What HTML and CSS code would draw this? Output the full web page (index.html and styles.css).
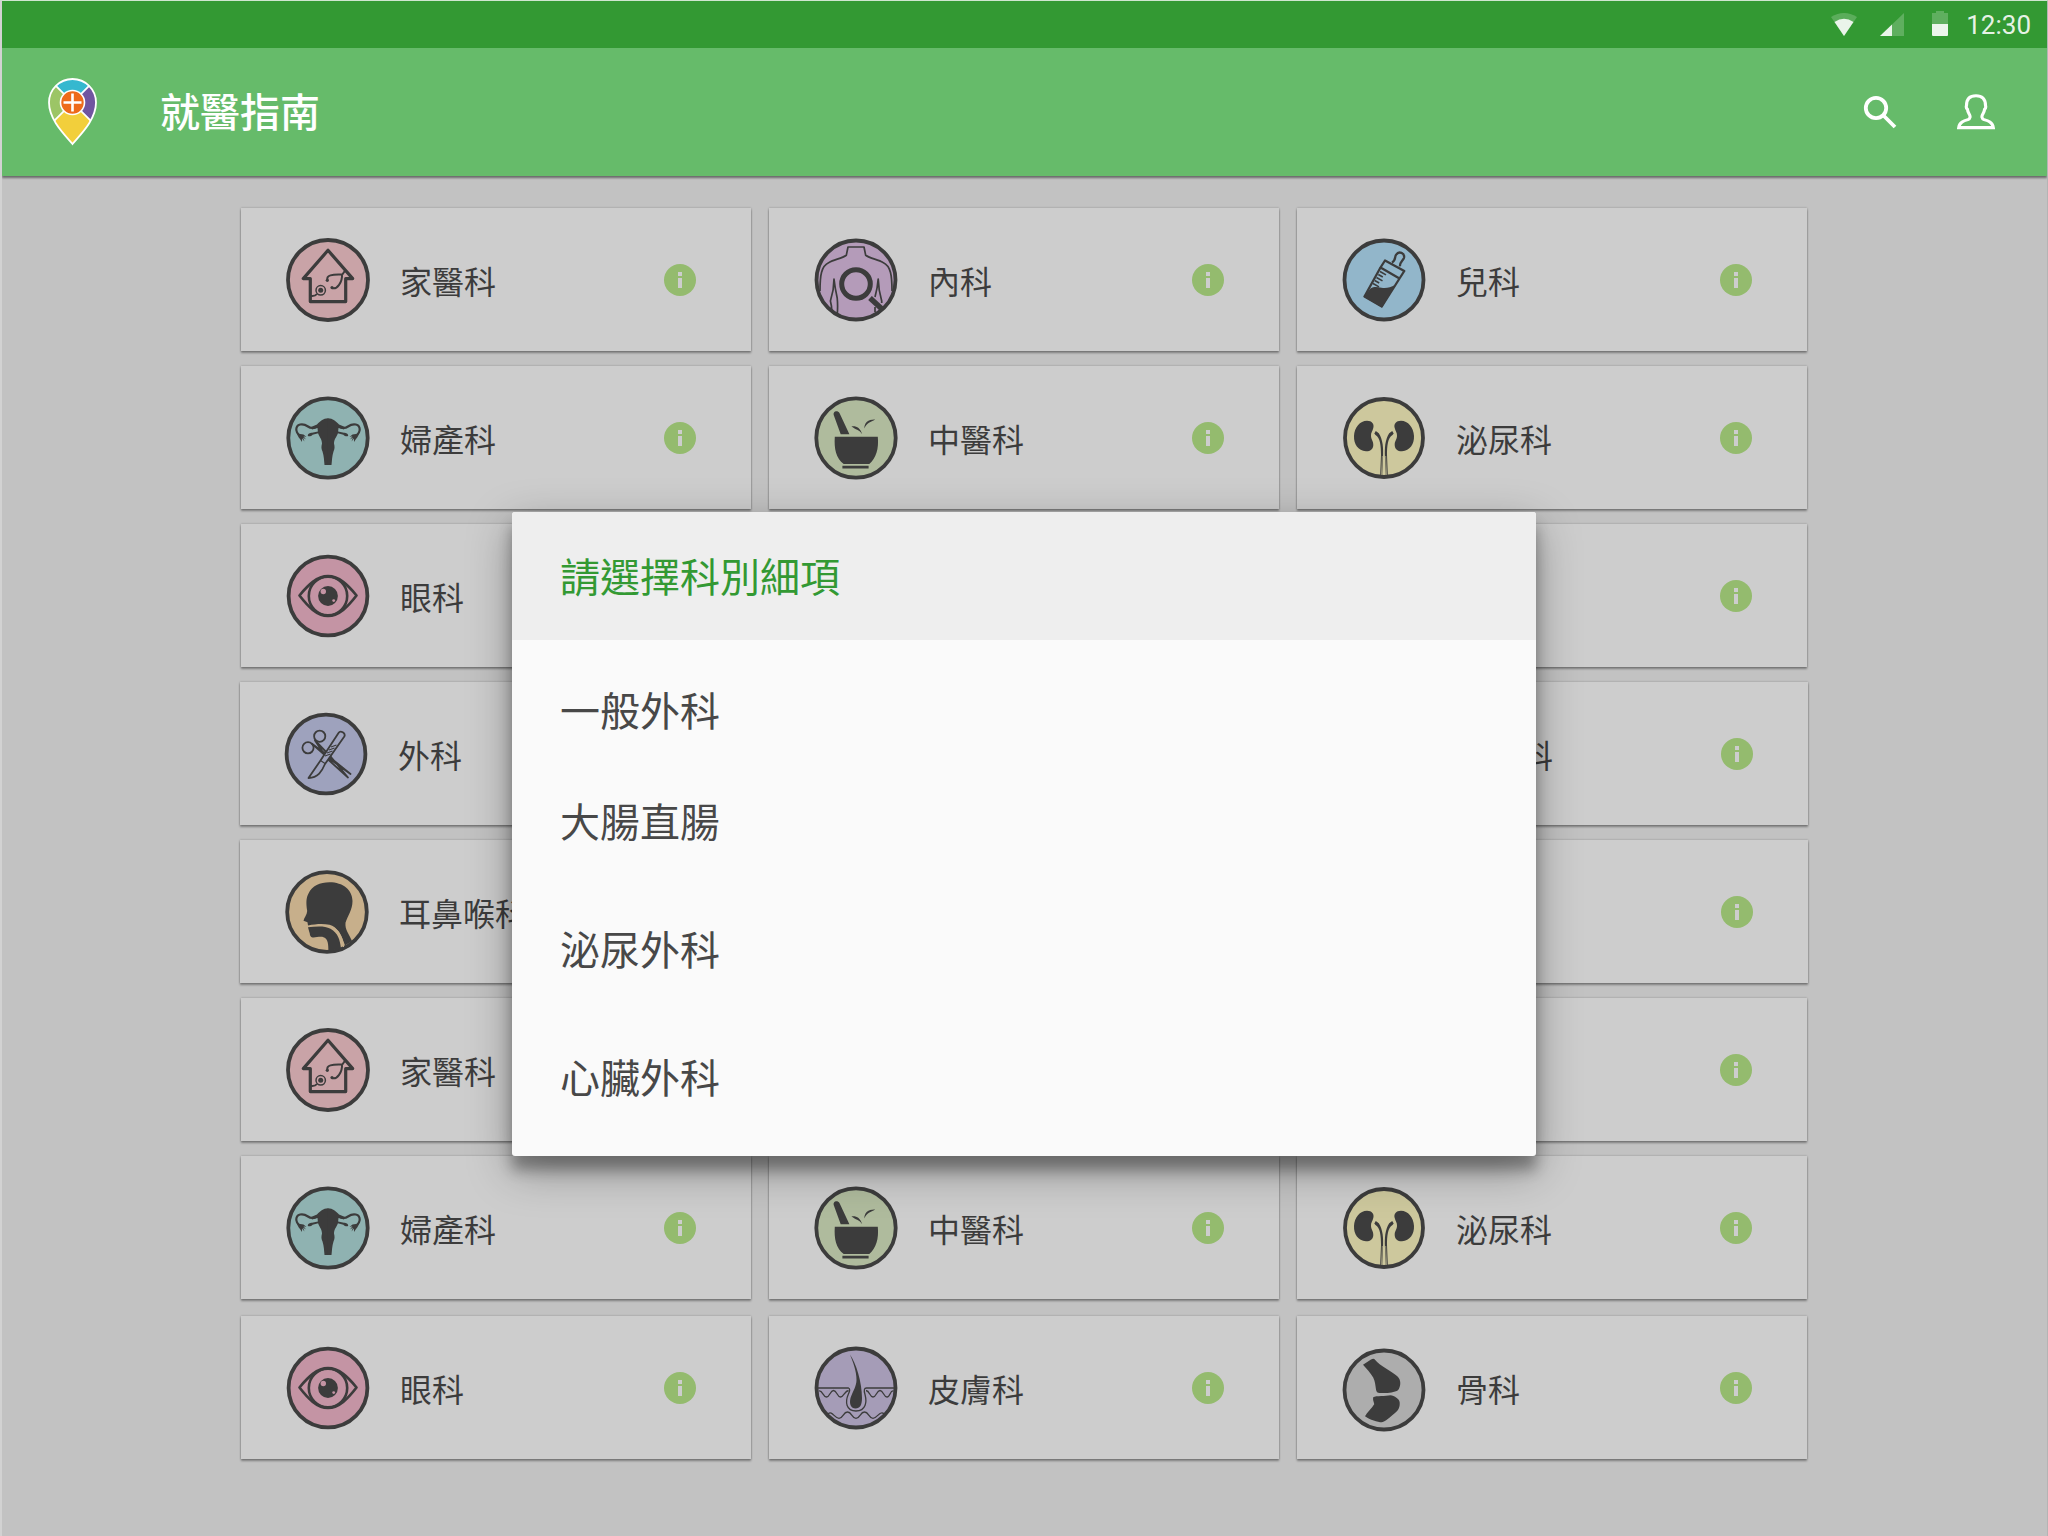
FILE: index.html
```html
<!DOCTYPE html>
<html lang="zh-Hant">
<head>
<meta charset="utf-8">
<title>就醫指南</title>
<link rel="stylesheet" href="styles.css">
</head>
<body>
<svg class="sprite" aria-hidden="true">
  <symbol id="info" viewBox="0 0 32 32">
    <circle cx="16" cy="16" r="16" fill="#94bb6e"/>
    <path d="M14 8h4v4h-4zM14 14h4v10h-4z" fill="#cdcdcd"/>
  </symbol>
  <symbol id="home" viewBox="0 0 84 84">
    <circle class="disc" cx="42" cy="42" r="40" fill="#c9a3a7"/>
    <path class="ln" stroke-width="3.2" d="M42 12.3 17.3 40.6h7v23h35.4v-23h7z"/>
    <path class="ln" stroke-width="2" d="M41.5 42C40 37.500 46 36 56 36.500 56.500 44 51 52 46 50M56 37l3.500-5M31 56q-2 2.500-6 2"/>
    <circle class="ln" stroke-width="1.500" cx="34.700" cy="52.300" r="4.700"/>
    <circle class="ink" cx="34.700" cy="52.300" r="2.500"/><circle class="ink" cx="41.300" cy="42.300" r="1.600"/><circle class="ink" cx="46" cy="49.600" r="1.600"/>
  </symbol>
  <symbol id="uterus" viewBox="0 0 84 84">
    <circle class="disc" cx="42" cy="42" r="39.700" fill="#8fb2b1"/>
    <g id="uterus-half">
      <path class="ink" d="M42.200 22.300C37 22.300 34 25.500 31 28.500l-6 2.500 1 2.500 5.500-1.500.5 5c1 3.500 4 6 4 10.500-.8 3.500-.8 5 .5 8 1.500 4.500 1.500 9 2 13.500h3.700z"/>
      <path class="ln" stroke-width="2.200" d="M31 30.500q-5 3-9 0C17 27 10 27.500 10.300 34q.3 3 2.700 5"/>
      <path class="ink" d="M11 37.500l6.500 1 3 2.500-3-.8 2.500 3.300-3-2 1.500 4-2.500-3v3.500l-2-3C12 41 11.500 39 11 37.500z"/>
      <path class="ink" d="M32 35.500l-6 1.200c-2 0-4.500 1.300-4.200 3 .8 1.200 3.500.5 4.800-1l5.700-1.500z"/>
    </g>
    <use href="#uterus-half" transform="matrix(-1 0 0 1 84 0)"/>
  </symbol>
  <symbol id="internal" viewBox="0 0 84 84">
    <circle class="disc" cx="42" cy="42" r="39.500" fill="#b49bb9"/>
    <path class="ln" stroke-width="1.700" d="M6 53C6 38 7 28 15 24.500c5-3 13-4 17.300-7.200L34 9h16l1.700 8.300C56 20.500 64 21.500 69 24.500 77 28 78 38 78 53M17.700 74q.3-5-1.300-11Q20 52 20 41q1 9 3.200 19 .8 8 0 17M61 59q2.500-9 3.200-18 .3 11 3.500 22v2M61 69v5"/>
    <circle class="ln" stroke-width="5" cx="42" cy="46" r="14.300"/>
    <path class="ln" stroke-width="5.400" d="M56 60l13 12"/>
  </symbol>
  <symbol id="bottle" viewBox="0 0 84 84">
    <circle class="disc" cx="42" cy="42" r="39.500" fill="#92b6ca"/>
    <path class="ln" stroke-width="2.300" d="M43 22.500 62.300 33 57.500 40.500 38.500 29.500zM50 24.500c4-2 2.500-5.500 4-7.700 3-4.500 9-1.500 8 3-1 3-4.500 4.200-4 8.500M38.500 29.500 22.500 58.500 39.800 68.500 57.500 40.500"/>
    <path class="ink" d="M28.500 50.500c4-2.300 7-1.300 11-.7 5 .7 9-.3 13.500-2.800L40 69.500 21.700 58.800z"/>
    <path class="ln" stroke-width="1.600" d="M38 33.500l6 3.400M36.300 36.500l4.500 2.500M34.500 39.500l6 3.400M32.700 42.500l4.500 2.500M31 45.500l6 3.400"/>
  </symbol>
  <symbol id="mortar" viewBox="0 0 84 84">
    <circle class="disc" cx="42" cy="42" r="39.700" fill="#afbb9d"/>
    <path class="ink" d="M20.800 40.700h43C65 53 62 62 55.300 68H29.700C22 62 20 53 20.800 40.700zM28.400 69.700h26.200v2.700H28.400zM26.700 38.300h8.700L25.600 17.200c-2-3.500-7-2-5.800 2zM37.400 30.300c5-.6 8.800 1.200 10.800 8-3.500-5.300-6.200-4-10.800-8zM50.400 32.500c-.3-6 4.500-9.300 10.800-8.900-4.500 3-8.500 3-10.800 8.900z"/>
  </symbol>
  <symbol id="kidney" viewBox="0 0 84 84">
    <circle class="disc" cx="42" cy="42" r="39" fill="#cdc89d"/>
    <g id="kidney-half">
      <path class="ink" d="M25 24.700c5 0 7.500 3.300 6.300 7.300-.8 3.300-2.500 4.500-2.300 8 .2 4 2.500 5 2.300 9.300-.3 4.200-3.500 6.200-7.300 6C16 54.700 11.700 48 12 40c.3-8.500 6-15.300 13-15.300z"/>
      <path class="ink" d="M32.300 37.500l1.500-2.500 3 2.300C41 44 41.500 52 41 62l-.8 17h-2l.8-20C39 50 38.200 41.500 33.500 39z"/>
      <path d="M39.400 79 40.300 60" stroke="#cdc89d" stroke-width=".6"/>
    </g>
    <use href="#kidney-half" transform="matrix(-1 0 0 1 84 0)"/>
  </symbol>
  <symbol id="eye" viewBox="0 0 84 84">
    <circle class="disc" cx="42" cy="42" r="39.400" fill="#c494a4"/>
    <path class="ln" stroke-width="2.700" d="M13.500 41.500C22 31 31 22.200 42 22.200s20 8.800 28.500 19.300C62 52.500 53 62 42 62S22 52.500 13.500 41.500z"/>
    <circle class="ln" stroke-width="2.600" cx="42" cy="42" r="19.200"/>
    <circle class="ink" cx="42" cy="42" r="9.900"/>
    <circle cx="37.300" cy="37.500" r="2.700" fill="#c494a4"/><circle cx="47.700" cy="46.600" r="1.400" fill="#c494a4"/>
  </symbol>
  <symbol id="surgery" viewBox="0 0 84 84">
    <circle class="disc" cx="42" cy="42" r="39.400" fill="#9ea2bd"/>
    <g class="ln" stroke-width="1.800">
      <circle cx="35.700" cy="24.200" r="5.600"/><circle cx="24" cy="35.800" r="5.600"/>
      <path d="M31 28.500 43.500 47 64 65.500 47 45zM28 31.800 43 43l23.500 19L43 45z"/>
      <path fill="#9ea2bd" d="M54.500 21c2-3.200 7.500.3 5.800 3.500L41 52C38 59 34 66 24.500 66l12-17.500z"/>
      <path stroke-width="1.200" d="M36.500 48.500 41 51.500M47 35l5.500-2M45 38l5.500-2M43 41l5.500-2M41 44l5.500-2"/>
    </g>
  </symbol>
  <symbol id="throat" viewBox="0 0 84 84">
    <circle class="disc" cx="42" cy="42" r="39.800" fill="#c7af8b"/>
    <path class="ink" d="M22.200 41C21 33 21 28 23.500 23.500 27 16 35 12.300 44.500 12.300 58 12.300 67.500 20 67.500 31c0 9-5 15-7 21.700-.6 7 3 10.300 6.500 18.300l-7 4.500C57 66 52 56 44.500 54.700c-7-1.200-14-.7-21.500.8l-.5-3.300-4-1.500c.5-3 3.500-5.700 3.700-9.700z"/>
    <path class="ink" d="M23 57.300c7.500-.8 16-2 22.500 1.500C53 63 55 70 56 78.500L43.500 81c-.3-6.500 0-12-5-13.800-4-1.400-11 1.700-12.700-.7-1.500-2-.5-2.500-1.500-4.500z"/>
    <path fill="none" stroke="#c7af8b" stroke-width="1.200" d="M45 56.200C54 59 57.500 67 58.500 77"/>
  </symbol>
  <symbol id="skin" viewBox="0 0 84 84">
    <circle class="disc" cx="42" cy="42" r="39.500" fill="#a59cb7"/>
    <path class="ln" stroke-width="1.300" d="M4 42h30.500q2.500 1-.3 6.500C31 56 32 65 42 65s11-9 9-16.500Q49 42 52.500 42H80M5 45c3.500-1 4 6 7.500 6s3.500-6.500 7-6.500 3.500 6.500 7 6.500 4-6 8-6.500M52 44.500c4 .5 3.500 6.500 7 6.500s3.500-6.500 7-6.500 3.500 6.500 7 6.500 3-7 6.500-6M14 68c4-4 6.500 4.300 11 4.300s4-6.300 8.500-6.300 4 6.300 8.500 6.300 4-6.300 8.500-6.300 4 6.300 8.500 6.300 6.500-8.300 11-4.500"/>
    <path class="ink" d="M36 8.500C42 17 48 36 48 52c0 7-2 10.500-6.500 10.500S35 58 36.500 52C39 45 42.500 40 42.500 34 42.500 25 39 16 36 8.500z"/>
  </symbol>
  <symbol id="bone" viewBox="0 0 84 84">
    <circle class="disc" cx="42" cy="42" r="39.500" fill="#adadad"/>
    <path class="ink" d="M21 16.700 29 11.500q3-1.500 4 .3c5 6.200 16 11.200 22.300 16.500 4 3.500 3.800 10 .7 14-4 2.700-13 3-16.200 2.700-4 0-5.300-.5-5.800-3.500-.6-4-.8-8-2.800-12C28.500 25 25 21 21 16.700zM31.200 49.300C34 47.500 44 48.500 48.400 47.300c4 .5 9 3.500 9.300 7.200.3 5-1.500 8-4.700 10.500-5 4-9 8.500-13.200 9.300-4 0-12-2.500-16.800-6 2-4 7-8 9.200-12-.3-3-1.500-3.500-1-7z"/>
  </symbol>
</svg>

<header class="top">
  <div class="status">
    <svg width="26" height="24" viewBox="0 0 26 24"><path d="M13 23 0 4Q13-4 26 4z" fill="#fff" fill-opacity=".2"/><path d="M13 23 3.500 9Q13 2.500 22.500 9z" fill="#fff" fill-opacity=".87"/></svg>
    <svg width="24" height="24" viewBox="0 0 24 24"><path d="M24 0v23H0z" fill="#fff" fill-opacity=".22"/><path d="M12 11.500V23H0z" fill="#fff" fill-opacity=".87"/></svg>
    <svg width="16" height="26" viewBox="0 0 16 26"><path d="M4 0h8v2h4v11H0V2h4z" fill="#fff" fill-opacity=".22"/><path d="M0 13h16v11q0 1-1 1H1q-1 0-1-1z" fill="#fff" fill-opacity=".9"/></svg>
    <span class="clock">12:30</span>
  </div>
  <div class="appbar">
    <svg class="logo" width="50" height="68" viewBox="0 0 50 68">
      <clipPath id="pin"><path d="M24.500 66C17 57 1 42 1 24.500a23.500 23.500 0 0 1 47 0C48 42 32 57 24.500 66z"/></clipPath>
      <g clip-path="url(#pin)">
        <path fill="#9cc566" d="M0 0h24.500v24.500L0 50z"/><path fill="#7055a0" d="M49 0H24.500v24.500L49 50z"/>
        <path fill="#35b8cf" d="M0 0h49L24.500 24.500z"/><path fill="#f2cf3b" d="M24.500 24.500 50 50v18H0V50z"/>
        <path stroke="#fff" stroke-width="1.800" d="M0 0 49 49M49 0 0 49"/>
      </g>
      <path fill="none" stroke="#fff" stroke-width="1.800" d="M24.500 66C17 57 1 42 1 24.500a23.500 23.500 0 0 1 47 0C48 42 32 57 24.500 66z"/>
      <circle cx="24.500" cy="24.500" r="12" fill="#ee6b1b" stroke="#fff" stroke-width="1.600"/>
      <path stroke="#fff" stroke-width="2.600" d="M15.500 24.500h18M24.500 15.500v18"/>
    </svg>
    <h1>就醫指南</h1>
    <svg class="search" width="34" height="34" viewBox="0 0 34 34" fill="none" stroke="#fff" stroke-width="3.800"><circle cx="13" cy="13" r="10.200"/><path d="M20.500 20.500 32 32"/></svg>
    <svg width="38" height="36" viewBox="0 0 38 36" fill="none" stroke="#fff" stroke-width="3.100"><path d="M1.700 33.600h34.600c-.8-5.500-5.300-6.800-9.300-8-2.500-1-2.500-3.300-1.300-5.300 1.200-1.800 1.600-2.500 1.900-5 1.200-1 1.300-2.500.9-3.800C28.500 5 25 1.800 19 1.800S9.500 5 9.500 11.500c-.4 1.300-.3 2.800.9 3.800.3 2.500.7 3.200 1.900 5 1.200 2 1.200 4.300-1.300 5.300-4 1.200-8.500 2.500-9.300 8z"/></svg>
  </div>
</header>

<main class="list">
  <div class="row">
    <article class="card"><svg class="pic"><use href="#home"/></svg><span class="label">家醫科</span><svg class="info"><use href="#info"/></svg></article>
    <article class="card"><svg class="pic"><use href="#internal"/></svg><span class="label">內科</span><svg class="info"><use href="#info"/></svg></article>
    <article class="card"><svg class="pic"><use href="#bottle"/></svg><span class="label">兒科</span><svg class="info"><use href="#info"/></svg></article>
  </div>
  <div class="row">
    <article class="card"><svg class="pic"><use href="#uterus"/></svg><span class="label">婦產科</span><svg class="info"><use href="#info"/></svg></article>
    <article class="card"><svg class="pic"><use href="#mortar"/></svg><span class="label">中醫科</span><svg class="info"><use href="#info"/></svg></article>
    <article class="card"><svg class="pic"><use href="#kidney"/></svg><span class="label">泌尿科</span><svg class="info"><use href="#info"/></svg></article>
  </div>
  <div class="row">
    <article class="card"><svg class="pic"><use href="#eye"/></svg><span class="label">眼科</span><svg class="info"><use href="#info"/></svg></article>
    <article class="card"></article>
    <article class="card"><svg class="info"><use href="#info"/></svg></article>
  </div>
  <div class="row wide">
    <article class="card tight"><svg class="pic"><use href="#surgery"/></svg><span class="label">外科</span><svg class="info"><use href="#info"/></svg></article>
    <article class="card"></article>
    <article class="card"><span class="pic"></span><span class="label">精神科</span><svg class="info"><use href="#info"/></svg></article>
  </div>
  <div class="row wide">
    <article class="card"><svg class="pic"><use href="#throat"/></svg><span class="label">耳鼻喉科</span><svg class="info"><use href="#info"/></svg></article>
    <article class="card"></article>
    <article class="card"><svg class="info"><use href="#info"/></svg></article>
  </div>
  <div class="row">
    <article class="card"><svg class="pic"><use href="#home"/></svg><span class="label">家醫科</span><svg class="info"><use href="#info"/></svg></article>
    <article class="card"></article>
    <article class="card"><svg class="info"><use href="#info"/></svg></article>
  </div>
  <div class="row">
    <article class="card"><svg class="pic"><use href="#uterus"/></svg><span class="label">婦產科</span><svg class="info"><use href="#info"/></svg></article>
    <article class="card"><svg class="pic"><use href="#mortar"/></svg><span class="label">中醫科</span><svg class="info"><use href="#info"/></svg></article>
    <article class="card"><svg class="pic"><use href="#kidney"/></svg><span class="label">泌尿科</span><svg class="info"><use href="#info"/></svg></article>
  </div>
  <div class="row last">
    <article class="card"><svg class="pic"><use href="#eye"/></svg><span class="label">眼科</span><svg class="info"><use href="#info"/></svg></article>
    <article class="card"><svg class="pic"><use href="#skin"/></svg><span class="label">皮膚科</span><svg class="info"><use href="#info"/></svg></article>
    <article class="card"><svg class="pic low"><use href="#bone"/></svg><span class="label">骨科</span><svg class="info"><use href="#info"/></svg></article>
  </div>
</main>

<section class="dialog" role="dialog">
  <h2>請選擇科別細項</h2>
  <ul>
    <li class="first">一般外科</li>
    <li>大腸直腸</li>
    <li>泌尿外科</li>
    <li>心臟外科</li>
  </ul>
</section>
</body>
</html>
```
FILE: styles.css
```css
* { box-sizing: border-box; }

body {
  position: relative;
  width: 2048px;
  height: 1536px;
  margin: 0;
  overflow: hidden;
  border: solid;
  border-width: 1px 1px 0 2px;
  border-color: #cfe6cf #b4b4b4 #c2c2c2 #d2d2d2;
  background: #c2c2c2;
  color: #3c3c3c;
  font-family: "Noto Sans CJK TC", "Noto Sans", sans-serif;
}

.sprite { position: absolute; width: 0; height: 0; }

.top {
  position: relative;
  height: 175px;
  background: #66bb6a;
  box-shadow: 0 2px 2px rgba(0, 0, 0, .45);
}

.status {
  display: flex;
  align-items: center;
  justify-content: flex-end;
  height: 47px;
  padding-right: 16px;
  background: #339933;
}
.status svg:nth-child(1) { margin-right: 23px; }
.status svg:nth-child(2) { margin-right: 28px; }
.status svg:nth-child(3) { margin-right: 18px; margin-bottom: 2px; }
.clock { font: 26px/46px Roboto, sans-serif; color: rgba(255, 255, 255, .9); }

.appbar {
  display: flex;
  align-items: center;
  height: 128px;
  padding: 0 52px 0 46px;
}
.logo { margin-right: 62px; }
h1 {
  margin: 0 auto 0 0;
  padding-bottom: 5px;
  font-size: 40px;
  font-weight: 500;
  line-height: 60px;
  color: #fff;
}
.search { margin-right: 60px; }

.list {
  display: flex;
  flex-direction: column;
  align-items: center;
  gap: 15px;
  padding: 32px 1px 0 0;
}
.row {
  display: flex;
  justify-content: space-between;
  width: 1566px;
  height: 143px;
}
.row.wide { width: 1568px; }
.row.last { margin-top: 2px; }

.card {
  display: flex;
  align-items: center;
  width: 510px;
  padding: 1px 55px 0 45px;
  background: #cdcdcd;
  box-shadow: 0 0 2px rgba(0, 0, 0, .26), 0 2px 2px rgba(0, 0, 0, .34);
}
.card.tight { padding-left: 44px; }
.pic { flex: none; width: 84px; height: 84px; margin-right: 30px; }
.pic.low { margin-top: 3px; }
.label { font-size: 32px; line-height: 48px; white-space: nowrap; }
.info { flex: none; width: 32px; height: 32px; margin-left: auto; }

.disc { stroke: #3c3c3c; stroke-width: 3.8px; }
.ink { fill: #3c3c3c; }
.ln { fill: none; stroke: #3c3c3c; stroke-linejoin: round; }

.dialog {
  position: absolute;
  left: 510px;
  top: 511px;
  width: 1024px;
  height: 644px;
  border-radius: 3px;
  background: #fafafa;
  box-shadow: 0 14px 14px rgba(0, 0, 0, .3), 0 14px 44px rgba(0, 0, 0, .34);
}
h2 {
  height: 128px;
  margin: 0;
  padding: 0 48px;
  border-radius: 3px 3px 0 0;
  background: #eee;
  color: #339933;
  font-size: 40px;
  font-weight: 400;
  line-height: 127px;
}
ul { margin: 0; padding: 5px 48px; list-style: none; }
li { font-size: 40px; line-height: 128px; color: #484848; }
li.first { margin-bottom: -17px; }
```
